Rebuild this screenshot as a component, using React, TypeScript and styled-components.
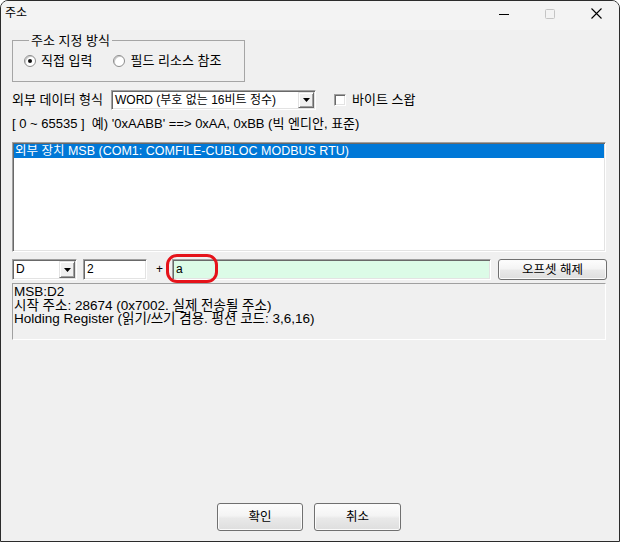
import React from "react";
import styled, { createGlobalStyle, css } from "styled-components";

const FONT = `"Liberation Sans", "Noto Sans CJK KR", sans-serif`;

const Global = createGlobalStyle`
  html, body { margin: 0; padding: 0; background: #ffffff; }
  body { width: 620px; height: 542px; overflow: hidden; }
  *, *::before, *::after { box-sizing: border-box; }
`;

const sunken = css`
  border: 1px solid;
  border-color: #a0a0a0 #ffffff #ffffff #a0a0a0;
  box-shadow: inset 1px 1px 0 #696969, inset -1px -1px 0 #e3e3e3;
`;

const Frame = styled.div`
  width: 620px;
  height: 542px;
  border: 1px solid #2b2b2b;
  border-radius: 8px 8px 0 0;
  overflow: hidden;
  display: flex;
  flex-direction: column;
  background: #f0f0f0;
  font-family: ${FONT};
  font-size: 13px;
  color: #000;
`;

const TitleBar = styled.div`
  height: 29px;
  flex: none;
  display: flex;
  align-items: flex-start;
  background: #f3f3f3;
`;

const Title = styled.div`
  flex: 1;
  padding: 6px 0 0 4px;
  font-size: 12px;
  line-height: 13px;
`;

const CaptionButton = styled.div`
  width: 46px;
  height: 25px;
  display: flex;
  align-items: center;
  justify-content: center;
`;

const Client = styled.div`
  flex: 1;
  display: flex;
  flex-direction: column;
  padding: 0 13px 10px 11px;
`;

const GroupBox = styled.fieldset`
  margin: 4px 0 0;
  width: 233px;
  min-width: 0;
  border: 1px solid #a5a5a5;
  padding: 7px 0 13px 11px;
`;

const Legend = styled.legend`
  margin-left: 5px;
  padding: 0 2px;
  line-height: 13px;
  font-size: 13px;
`;

const RadioRow = styled.div`
  display: flex;
  align-items: center;
  height: 14px;
  gap: 21px;
`;

const RadioOption = styled.label`
  display: flex;
  align-items: center;
  gap: 5px;
  line-height: 14px;
  white-space: nowrap;
`;

const RadioCircle = styled.span<{ $checked?: boolean }>`
  position: relative;
  flex: none;
  width: 12px;
  height: 12px;
  border-radius: 50%;
  border: 1px solid #8d8d8d;
  background: #ffffff;
  box-shadow: inset 1px 1px 0 #c9c9c9;
  ${(p) =>
    p.$checked &&
    css`
      &::after {
        content: "";
        position: absolute;
        left: 3px;
        top: 3px;
        width: 4px;
        height: 4px;
        border-radius: 50%;
        background: #111;
      }
    `}
`;

const FormatRow = styled.div`
  margin-top: 8px;
  height: 20px;
  display: flex;
  align-items: center;
`;

const FieldLabel = styled.span<{ $w: number }>`
  width: ${(p) => p.$w}px;
  flex: none;
  line-height: 14px;
  white-space: nowrap;
`;

const Combo = styled.div<{ $w: number; $h: number }>`
  width: ${(p) => p.$w}px;
  height: ${(p) => p.$h}px;
  flex: none;
  ${sunken};
  background: #ffffff;
  display: flex;
  align-items: stretch;
  padding: 1px;
`;

const ComboText = styled.span`
  flex: 1;
  padding-left: 2px;
  font-size: 12px;
  line-height: 16px;
  white-space: nowrap;
  overflow: hidden;
`;

const DropButton = styled.span`
  width: 16px;
  flex: none;
  background: #f0f0f0;
  border: 1px solid;
  border-color: #e3e3e3 #696969 #696969 #e3e3e3;
  box-shadow: inset 1px 1px 0 #ffffff, inset -1px -1px 0 #a0a0a0;
  display: flex;
  align-items: center;
  justify-content: center;
`;

const CheckOption = styled.label`
  margin-left: 18px;
  display: flex;
  align-items: center;
  gap: 6px;
  line-height: 14px;
  white-space: nowrap;
`;

const CheckBox = styled.span`
  width: 12px;
  height: 12px;
  flex: none;
  background: #ffffff;
  ${sunken};
`;

const HintLine = styled.div`
  margin-top: 7px;
  line-height: 13px;
  white-space: pre;
`;

const ListBox = styled.div`
  margin-top: 12px;
  height: 110px;
  ${sunken};
  background: #ffffff;
  padding: 1px;
`;

const ListItem = styled.div<{ $selected?: boolean }>`
  height: 14px;
  line-height: 14px;
  padding-left: 1px;
  font-size: 12.5px;
  white-space: nowrap;
  background: ${(p) => (p.$selected ? "#0078d7" : "transparent")};
  color: ${(p) => (p.$selected ? "#ffffff" : "#000000")};
`;

const InputRow = styled.div`
  margin-top: 7px;
  height: 21px;
  display: flex;
  align-items: stretch;
`;

const TextBox = styled.div<{ $w: number; $bg?: string; $gap?: number }>`
  position: relative;
  width: ${(p) => p.$w}px;
  margin-left: ${(p) => p.$gap ?? 0}px;
  flex: none;
  ${sunken};
  background: ${(p) => p.$bg ?? "#ffffff"};
  padding: 0 3px;
  font-size: 12px;
  line-height: 19px;
  white-space: nowrap;
`;

const PlusSign = styled.span`
  width: 25px;
  flex: none;
  text-align: center;
  font-size: 12px;
  line-height: 21px;
`;

const Highlight = styled.span`
  position: absolute;
  left: -7px;
  top: -6px;
  width: 52px;
  height: 29px;
  border: 3px solid #e5131a;
  border-radius: 11px;
  pointer-events: none;
`;

const PushButton = styled.button<{ $w: number; $h: number; $gap?: number }>`
  width: ${(p) => p.$w}px;
  height: ${(p) => p.$h}px;
  margin: 0 0 0 ${(p) => p.$gap ?? 0}px;
  flex: none;
  padding: 0;
  border: 1px solid #707070;
  border-radius: 3px;
  background: linear-gradient(#fdfdfd 0%, #f4f4f4 45%, #e9e9e9 55%, #dedede 100%);
  box-shadow: inset 0 0 0 1px #fbfbfb;
  font-family: ${FONT};
  font-size: 12.5px;
  color: #000;
  line-height: 14px;
`;

const InfoBox = styled.div`
  margin-top: 3px;
  height: 57px;
  border: 1px solid;
  border-color: #a0a0a0 #ffffff #ffffff #a0a0a0;
  padding: 1px 1px;
  font-size: 13.5px;
  line-height: 13.5px;
  white-space: nowrap;
`;

const ButtonBar = styled.div`
  margin-top: auto;
  display: flex;
  justify-content: center;
  gap: 11px;
`;

const Arrow = () => (
  <svg width="7" height="4" viewBox="0 0 7 4">
    <polygon points="0,0 7,0 3.5,4" fill="#000" />
  </svg>
);

export default function App() {
  return (
    <>
      <Global />
      <Frame>
        <TitleBar>
          <Title>주소</Title>
          <CaptionButton>
            <svg width="10" height="10" viewBox="0 0 10 10">
              <line x1="0" y1="5.5" x2="10" y2="5.5" stroke="#000" strokeWidth="1" />
            </svg>
          </CaptionButton>
          <CaptionButton>
            <svg width="10" height="10" viewBox="0 0 10 10">
              <rect x="0.5" y="0.5" width="9" height="9" rx="1" fill="none" stroke="#c4c4c4" strokeWidth="1" />
            </svg>
          </CaptionButton>
          <CaptionButton>
            <svg width="11" height="11" viewBox="0 0 11 11">
              <path d="M0.5 0.5 L10.5 10.5 M10.5 0.5 L0.5 10.5" stroke="#000" strokeWidth="1.1" />
            </svg>
          </CaptionButton>
        </TitleBar>
        <Client>
          <GroupBox>
            <Legend>주소 지정 방식</Legend>
            <RadioRow>
              <RadioOption>
                <RadioCircle $checked />
                직접 입력
              </RadioOption>
              <RadioOption>
                <RadioCircle />
                필드 리소스 참조
              </RadioOption>
            </RadioRow>
          </GroupBox>

          <FormatRow>
            <FieldLabel $w={99}>외부 데이터 형식</FieldLabel>
            <Combo $w={205} $h={20}>
              <ComboText>WORD (부호 없는 16비트 정수)</ComboText>
              <DropButton>
                <Arrow />
              </DropButton>
            </Combo>
            <CheckOption>
              <CheckBox />
              바이트 스왑
            </CheckOption>
          </FormatRow>

          <HintLine>{"[ 0 ~ 65535 ]  예) '0xAABB' ==> 0xAA, 0xBB (빅 엔디안, 표준)"}</HintLine>

          <ListBox>
            <ListItem $selected>외부 장치 MSB (COM1: COMFILE-CUBLOC MODBUS RTU)</ListItem>
          </ListBox>

          <InputRow>
            <Combo $w={65} $h={21}>
              <ComboText>D</ComboText>
              <DropButton>
                <Arrow />
              </DropButton>
            </Combo>
            <TextBox $w={64} $gap={6}>
              2
            </TextBox>
            <PlusSign>+</PlusSign>
            <TextBox $w={319} $bg="#dcfbe7">
              a
              <Highlight />
            </TextBox>
            <PushButton $w={109} $h={21} $gap={7}>
              오프셋 해제
            </PushButton>
          </InputRow>

          <InfoBox>
            MSB:D2
            <br />
            시작 주소: 28674 (0x7002. 실제 전송될 주소)
            <br />
            Holding Register (읽기/쓰기 겸용. 펑션 코드: 3,6,16)
          </InfoBox>

          <ButtonBar>
            <PushButton $w={86} $h={28}>
              확인
            </PushButton>
            <PushButton $w={87} $h={28}>
              취소
            </PushButton>
          </ButtonBar>
        </Client>
      </Frame>
    </>
  );
}
